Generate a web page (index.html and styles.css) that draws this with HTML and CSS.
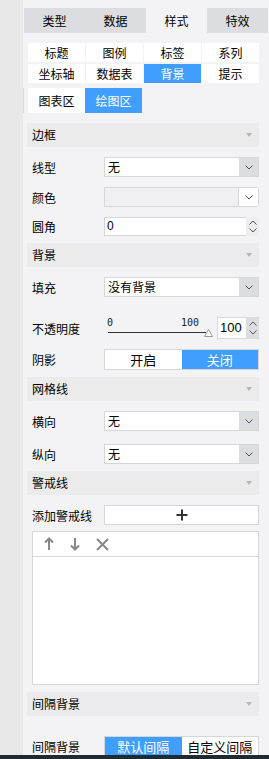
FILE: index.html
```html
<!DOCTYPE html>
<html lang="zh">
<head>
    <meta charset="UTF-8">
    <title>图表样式</title>
    <link rel="stylesheet" href="styles.css">
</head>
<body>

<div class="app">
    <div class="side"></div>
    <div class="main">
        <div class="tabs">
            <div class="tab">类型</div>
            <div class="tab">数据</div>
            <div class="tab active">样式</div>
            <div class="tab">特效</div>
        </div>

        <div class="subtabs">
            <div class="subtab">标题</div>
            <div class="subtab">图例</div>
            <div class="subtab">标签</div>
            <div class="subtab">系列</div>
            <div class="subtab">坐标轴</div>
            <div class="subtab">数据表</div>
            <div class="subtab active">背景</div>
            <div class="subtab">提示</div>
        </div>

        <div class="areatabs">
            <div class="subtab">图表区</div>
            <div class="subtab active">绘图区</div>
        </div>

        <div class="section first">
            <div class="sec-head">边框<i class="caret"></i></div>
            <div class="row">
                <span class="label">线型</span>
                <div class="select"><span class="val">无</span><span class="arrow"><svg width="8" height="5" viewBox="0 0 8 5"><path d="M0.5 0.5L4 4L7.5 0.5" fill="none" stroke="#555"/></svg></span></div>
            </div>
            <div class="row">
                <span class="label">颜色</span>
                <div class="select disabled"><span class="val"></span><span class="arrow"><svg width="8" height="5" viewBox="0 0 8 5"><path d="M0.5 0.5L4 4L7.5 0.5" fill="none" stroke="#555"/></svg></span></div>
            </div>
            <div class="row short">
                <span class="label">圆角</span>
                <div class="number wide">
                    <span class="val">0</span>
                    <span class="spin light">
                        <svg width="8" height="5" viewBox="0 0 8 5"><path d="M0.5 4.5L4 1L7.5 4.5" fill="none" stroke="#555"/></svg>
                        <svg width="8" height="5" viewBox="0 0 8 5"><path d="M0.5 0.5L4 4L7.5 0.5" fill="none" stroke="#555"/></svg>
                    </span>
                </div>
            </div>
        </div>

        <div class="section">
            <div class="sec-head">背景<i class="caret"></i></div>
            <div class="row">
                <span class="label">填充</span>
                <div class="select"><span class="val">没有背景</span><span class="arrow"><svg width="8" height="5" viewBox="0 0 8 5"><path d="M0.5 0.5L4 4L7.5 0.5" fill="none" stroke="#555"/></svg></span></div>
            </div>
            <div class="row opacity">
                <span class="label">不透明度</span>
                <div class="slider">
                    <div class="scale"><span>0</span><span>100</span></div>
                    <div class="track"></div>
                    <svg class="thumb" width="9" height="8" viewBox="0 0 9 8"><path d="M4.5 0.5L8.5 7.5H0.5Z" fill="#fff" stroke="#999"/></svg>
                </div>
                <div class="number">
                    <span class="val">100</span>
                    <span class="spin">
                        <svg width="8" height="5" viewBox="0 0 8 5"><path d="M0.5 4.5L4 1L7.5 4.5" fill="none" stroke="#555"/></svg>
                        <svg width="8" height="5" viewBox="0 0 8 5"><path d="M0.5 0.5L4 4L7.5 0.5" fill="none" stroke="#555"/></svg>
                    </span>
                </div>
            </div>
            <div class="row toggle-row">
                <span class="label">阴影</span>
                <div class="toggle">
                    <span>开启</span>
                    <span class="on">关闭</span>
                </div>
            </div>
        </div>

        <div class="section">
            <div class="sec-head">网格线<i class="caret"></i></div>
            <div class="row">
                <span class="label">横向</span>
                <div class="select"><span class="val">无</span><span class="arrow"><svg width="8" height="5" viewBox="0 0 8 5"><path d="M0.5 0.5L4 4L7.5 0.5" fill="none" stroke="#555"/></svg></span></div>
            </div>
            <div class="row far">
                <span class="label">纵向</span>
                <div class="select"><span class="val">无</span><span class="arrow"><svg width="8" height="5" viewBox="0 0 8 5"><path d="M0.5 0.5L4 4L7.5 0.5" fill="none" stroke="#555"/></svg></span></div>
            </div>
        </div>

        <div class="section">
            <div class="sec-head">警戒线<i class="caret"></i></div>
            <div class="row">
                <span class="label">添加警戒线</span>
                <div class="add-btn">
                    <svg width="12" height="12" viewBox="0 0 12 12"><path d="M6 0.5V11.5M0.5 6H11.5" stroke="#333" stroke-width="2"/></svg>
                </div>
            </div>
            <div class="list">
                <div class="list-tools">
                    <svg width="10" height="14" viewBox="0 0 10 14"><path d="M5 13V2M1 5.5L5 1.5L9 5.5" fill="none" stroke="#888" stroke-width="2"/></svg>
                    <svg width="10" height="14" viewBox="0 0 10 14"><path d="M5 1V12M1 8.5L5 12.5L9 8.5" fill="none" stroke="#888" stroke-width="2"/></svg>
                    <svg width="13" height="13" viewBox="0 0 13 13"><path d="M1 1L12 12M12 1L1 12" fill="none" stroke="#888" stroke-width="2"/></svg>
                </div>
            </div>
        </div>

        <div class="section">
            <div class="sec-head">间隔背景<i class="caret"></i></div>
            <div class="row toggle-row gap">
                <span class="label">间隔背景</span>
                <div class="toggle">
                    <span class="on">默认间隔</span>
                    <span>自定义间隔</span>
                </div>
            </div>
        </div>
    </div>
</div>

<div class="taskbar"></div>

</body>
</html>
```

FILE: styles.css
```css
html, body {
    margin: 0;
    padding: 0;
    height: 759px;
    overflow: hidden;
}
body {
    font-family: "Noto Sans CJK SC", "Liberation Sans", sans-serif;
    font-size: 12px;
    color: #000;
    background: #f3f3f5;
}
.app {
    display: flex;
    min-height: 759px;
}
.side {
    width: 23px;
    flex: none;
    background: #e8e8e8;
}
.main {
    flex: 1;
    background: #f3f3f5;
    padding-top: 8px;
}

/* top tabs */
.tabs {
    display: grid;
    grid-template-columns: repeat(4, 61px);
    margin-left: 1px;
    height: 25px;
}
.tab {
    background: #dcdde0;
    text-align: center;
    line-height: 25px;
}
.tab.active {
    background: #f3f3f5;
}

/* sub tabs */
.subtabs {
    display: grid;
    grid-template-columns: repeat(4, 57px);
    grid-auto-rows: 19px;
    column-gap: 1px;
    row-gap: 2px;
    margin: 10px 0 0 5px;
}
.subtab {
    background: #fff;
    text-align: center;
    line-height: 19px;
}
.subtab.active {
    background: #409eff;
    color: #fff;
}
.areatabs {
    display: grid;
    grid-template-columns: 57px 57px;
    grid-auto-rows: 25px;
    margin-top: 5px;
    padding-left: 4px;
    border-left: 1px solid #d8d8d8;
}
.areatabs .subtab {
    line-height: 25px;
}

/* sections */
.section {
    width: 232px;
    margin-left: 4px;
    padding-bottom: 7px;
}
.section.first {
    margin-top: 10px;
}
.sec-head {
    position: relative;
    height: 24px;
    line-height: 24px;
    padding-left: 5px;
    background: #ebebeb;
}
.caret {
    position: absolute;
    right: 7px;
    top: 10px;
    border-left: 3px solid transparent;
    border-right: 3px solid transparent;
    border-top: 4px solid #b8b8b8;
}
.row {
    display: flex;
    align-items: center;
    height: 20px;
    margin-top: 10px;
}
.row.short {
    height: 19px;
}
.row.far {
    margin-top: 13px;
}
.label {
    width: 72px;
    padding-left: 5px;
    flex: none;
    white-space: nowrap;
}

/* select */
.select {
    display: flex;
    width: 155px;
    height: 100%;
    box-sizing: border-box;
    border: 1px solid #d6d6d6;
    background: #fff;
}
.select .val {
    flex: 1;
    padding-left: 3px;
    line-height: 18px;
}
.select .arrow {
    width: 19px;
    display: flex;
    align-items: center;
    justify-content: center;
    background: #dcdde0;
}
.select.disabled {
    background: #f0f0f2;
    border-radius: 0 3px 3px 0;
}
.select.disabled .arrow {
    background: #fff;
    border-left: 1px solid #d6d6d6;
}

/* number input */
.number {
    display: flex;
    height: 100%;
    width: 42px;
    margin-left: 4px;
    box-sizing: border-box;
}
.number.wide {
    width: 155px;
    margin-left: 0;
}
.number .val {
    flex: 1;
    background: #fff;
    border: 1px solid #d6d6d6;
    border-right: none;
    padding-left: 2px;
    font-family: "Liberation Sans", sans-serif;
    font-size: 13px;
    line-height: 19px;
}
.number.wide .val {
    line-height: 17px;
    font-size: 12px;
}
.spin {
    width: 13px;
    display: flex;
    flex-direction: column;
    align-items: center;
    justify-content: space-around;
    background: #dcdde0;
    padding: 2px 0;
    box-sizing: border-box;
}
.spin.light {
    background: #eeeeef;
}

/* opacity slider */
.row.opacity {
    height: 22px;
    margin-top: 20px;
}
.slider {
    position: relative;
    width: 109px;
    height: 100%;
    flex: none;
}
.scale {
    display: flex;
    justify-content: space-between;
    padding: 0 14px 0 3px;
    margin-top: 1px;
    font-family: "DejaVu Sans Mono", monospace;
    font-size: 10px;
    line-height: 10px;
    color: #222;
}
.track {
    margin: 4px 7px 0 4px;
    border-top: 1px solid #333;
}
.thumb {
    position: absolute;
    right: 0;
    top: 12px;
}

/* toggle */
.row.toggle-row {
    height: 21px;
}
.row.toggle-row.gap {
    margin-top: 20px;
}
.toggle {
    display: flex;
    width: 155px;
    height: 100%;
    box-sizing: border-box;
    border: 1px solid #d6d6d6;
    background: #fff;
}
.toggle span {
    flex: 1;
    text-align: center;
    line-height: 19px;
    font-size: 13px;
}
.toggle .on {
    background: #409eff;
    color: #fff;
}

/* warning lines */
.add-btn {
    width: 155px;
    height: 100%;
    box-sizing: border-box;
    border: 1px solid #d6d6d6;
    background: #fff;
    display: flex;
    align-items: center;
    justify-content: center;
}
.list {
    margin: 6px 0 0 5px;
    height: 154px;
    box-sizing: border-box;
    border: 1px solid #d6d6d6;
    background: #fff;
}
.list-tools {
    display: flex;
    align-items: center;
    gap: 16px;
    height: 24px;
    padding-left: 11px;
    border-bottom: 1px solid #d6d6d6;
}

.taskbar {
    position: fixed;
    left: 0;
    right: 0;
    bottom: 0;
    height: 4px;
    background: #1f2b31;
}
```
